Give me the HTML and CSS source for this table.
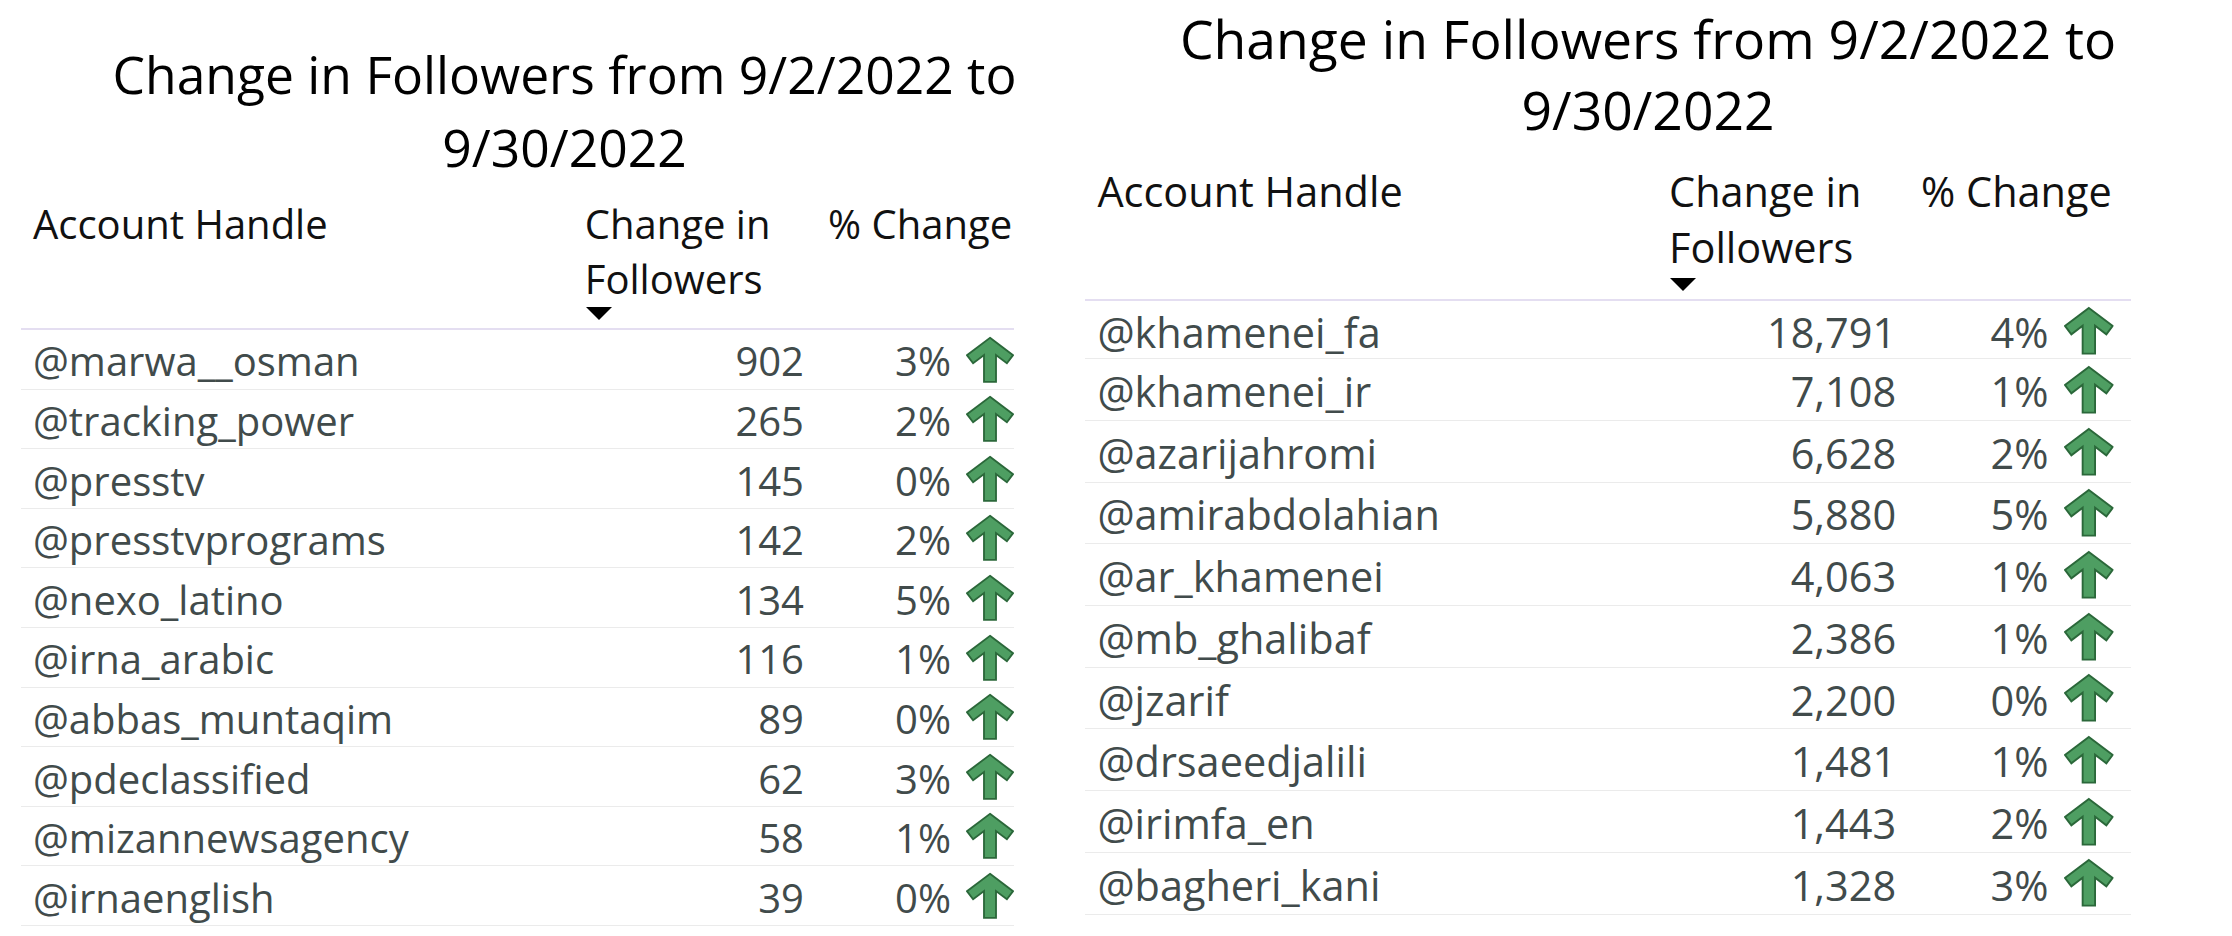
FILE: index.html
```html
<!DOCTYPE html>
<html lang="en">
<head>
<meta charset="utf-8">
<title>Change in Followers</title>
<link rel="stylesheet" href="styles.css">
</head>
<body>
<svg class="defs" width="0" height="0" aria-hidden="true">
  <symbol id="up-arrow" viewBox="0 0 52 50">
    <polygon points="26,1.2 51,20 44.3,28.8 32.5,19.8 32.5,49 19.5,49 19.5,19.8 7.7,28.8 1,20" fill="#4e9e62" stroke="#2b683a" stroke-width="2" stroke-linejoin="miter"/>
  </symbol>
</svg>
<main class="board">
  <section class="panel panel--left">
    <h1 class="title"><span class="title-line">Change in Followers from 9/2/2022 to</span><span class="title-line">9/30/2022</span></h1>
    <div class="table">
      <div class="thead">
        <div class="th th-handle">Account Handle</div>
        <div class="th th-change"><span class="th-text">Change in Followers</span><span class="sort"></span></div>
        <div class="th th-pct">% Change</div>
      </div>
      <div class="tr"><div class="td td-handle">@marwa__osman</div><div class="td td-num">902</div><div class="td td-pct"><span>3%</span><svg class="up"><use href="#up-arrow"/></svg></div></div>
      <div class="tr"><div class="td td-handle">@tracking_power</div><div class="td td-num">265</div><div class="td td-pct"><span>2%</span><svg class="up"><use href="#up-arrow"/></svg></div></div>
      <div class="tr"><div class="td td-handle">@presstv</div><div class="td td-num">145</div><div class="td td-pct"><span>0%</span><svg class="up"><use href="#up-arrow"/></svg></div></div>
      <div class="tr"><div class="td td-handle">@presstvprograms</div><div class="td td-num">142</div><div class="td td-pct"><span>2%</span><svg class="up"><use href="#up-arrow"/></svg></div></div>
      <div class="tr"><div class="td td-handle">@nexo_latino</div><div class="td td-num">134</div><div class="td td-pct"><span>5%</span><svg class="up"><use href="#up-arrow"/></svg></div></div>
      <div class="tr"><div class="td td-handle">@irna_arabic</div><div class="td td-num">116</div><div class="td td-pct"><span>1%</span><svg class="up"><use href="#up-arrow"/></svg></div></div>
      <div class="tr"><div class="td td-handle">@abbas_muntaqim</div><div class="td td-num">89</div><div class="td td-pct"><span>0%</span><svg class="up"><use href="#up-arrow"/></svg></div></div>
      <div class="tr"><div class="td td-handle">@pdeclassified</div><div class="td td-num">62</div><div class="td td-pct"><span>3%</span><svg class="up"><use href="#up-arrow"/></svg></div></div>
      <div class="tr"><div class="td td-handle">@mizannewsagency</div><div class="td td-num">58</div><div class="td td-pct"><span>1%</span><svg class="up"><use href="#up-arrow"/></svg></div></div>
      <div class="tr"><div class="td td-handle">@irnaenglish</div><div class="td td-num">39</div><div class="td td-pct"><span>0%</span><svg class="up"><use href="#up-arrow"/></svg></div></div>
    </div>
  </section>
  <section class="panel panel--right">
    <h1 class="title"><span class="title-line">Change in Followers from 9/2/2022 to</span><span class="title-line">9/30/2022</span></h1>
    <div class="table">
      <div class="thead">
        <div class="th th-handle">Account Handle</div>
        <div class="th th-change"><span class="th-text">Change in Followers</span><span class="sort"></span></div>
        <div class="th th-pct">% Change</div>
      </div>
      <div class="tr"><div class="td td-handle">@khamenei_fa</div><div class="td td-num">18,791</div><div class="td td-pct"><span>4%</span><svg class="up"><use href="#up-arrow"/></svg></div></div>
      <div class="tr"><div class="td td-handle">@khamenei_ir</div><div class="td td-num">7,108</div><div class="td td-pct"><span>1%</span><svg class="up"><use href="#up-arrow"/></svg></div></div>
      <div class="tr"><div class="td td-handle">@azarijahromi</div><div class="td td-num">6,628</div><div class="td td-pct"><span>2%</span><svg class="up"><use href="#up-arrow"/></svg></div></div>
      <div class="tr"><div class="td td-handle">@amirabdolahian</div><div class="td td-num">5,880</div><div class="td td-pct"><span>5%</span><svg class="up"><use href="#up-arrow"/></svg></div></div>
      <div class="tr"><div class="td td-handle">@ar_khamenei</div><div class="td td-num">4,063</div><div class="td td-pct"><span>1%</span><svg class="up"><use href="#up-arrow"/></svg></div></div>
      <div class="tr"><div class="td td-handle">@mb_ghalibaf</div><div class="td td-num">2,386</div><div class="td td-pct"><span>1%</span><svg class="up"><use href="#up-arrow"/></svg></div></div>
      <div class="tr"><div class="td td-handle">@jzarif</div><div class="td td-num">2,200</div><div class="td td-pct"><span>0%</span><svg class="up"><use href="#up-arrow"/></svg></div></div>
      <div class="tr"><div class="td td-handle">@drsaeedjalili</div><div class="td td-num">1,481</div><div class="td td-pct"><span>1%</span><svg class="up"><use href="#up-arrow"/></svg></div></div>
      <div class="tr"><div class="td td-handle">@irimfa_en</div><div class="td td-num">1,443</div><div class="td td-pct"><span>2%</span><svg class="up"><use href="#up-arrow"/></svg></div></div>
      <div class="tr"><div class="td td-handle">@bagheri_kani</div><div class="td td-num">1,328</div><div class="td td-pct"><span>3%</span><svg class="up"><use href="#up-arrow"/></svg></div></div>
    </div>
  </section>
</main>
</body>
</html>
```

FILE: styles.css
```css
* { box-sizing: border-box; }

html, body {
  margin: 0;
  padding: 0;
  background: #ffffff;
}

body {
  font-family: "Open Sans", "Noto Sans", sans-serif;
  color: #000;
  overflow: hidden;
}

.defs {
  position: absolute;
  width: 0;
  height: 0;
  overflow: hidden;
}

.board {
  display: flex;
  align-items: flex-start;
  width: 2232px;
  height: 936px;
}

.panel {
  --u: 40px;
  --tail: 0px;
  --title-top: 37.5px;
  --title-lh: 73px;
  --title-gap: 12px;
  --first-row: calc(var(--u) * 1.465 + 1px);
  font-size: var(--u);
  flex: none;
  padding-left: 21px;
  padding-top: var(--title-top);
}

.panel--left {
  width: 1064px;
}

.panel--right {
  --u: 41.44px;
  --tail: 17px;
  --title-top: 3px;
  --title-lh: 71px;
  --title-gap: 17.5px;
  --first-row: calc(var(--u) * 1.37 + 1px);
}

.title {
  margin: 0 0 var(--title-gap) 0;
  width: calc(var(--u) * 27.175);
  font-size: calc(var(--u) * 1.29);
  line-height: var(--title-lh);
  font-weight: 400;
  text-align: center;
  color: #000;
}

.title-line {
  display: block;
  white-space: nowrap;
}

.table {
  width: calc(var(--u) * 24.825 + var(--tail));
}

.thead,
.tr {
  display: grid;
  grid-template-columns: calc(var(--u) * 13.875) calc(var(--u) * 6) calc(var(--u) * 4.95) var(--tail);
}

.thead {
  border-bottom: 2px solid #e4def1;
  padding-bottom: calc(var(--u) * 0.2);
  line-height: calc(var(--u) * 1.375);
  color: #111;
}

.th {
  white-space: nowrap;
}

.th-handle {
  padding-left: calc(var(--u) * 0.3);
}

.th-change {
  padding-left: calc(var(--u) * 0.22);
  white-space: normal;
  display: flex;
  flex-direction: column;
  align-items: flex-start;
}

.th-text {
  display: block;
  width: calc(var(--u) * 5.4);
}

.sort {
  display: block;
  margin-top: calc(var(--u) * 0.04);
  margin-left: calc(var(--u) * 0.02);
  width: 0;
  height: 0;
  border-left: calc(var(--u) * 0.3375) solid transparent;
  border-right: calc(var(--u) * 0.3375) solid transparent;
  border-top: calc(var(--u) * 0.325) solid #000;
}

.th-pct {
  padding-left: calc(var(--u) * 0.3);
}

.tr {
  height: calc(var(--u) * 1.465 + 1px);
  border-bottom: 1px solid #ebebeb;
  align-items: center;
  color: #414b4b;
}

.thead + .tr {
  height: var(--first-row);
}

.td {
  white-space: nowrap;
  padding-top: 3px;
}

.td-handle {
  padding-left: calc(var(--u) * 0.3);
}

.td-num {
  text-align: right;
  padding-right: calc(var(--u) * 0.3);
}

.td-pct {
  display: flex;
  align-items: center;
  justify-content: flex-end;
  gap: calc(var(--u) * 0.375);
  padding-top: 0;
}

.td-pct span {
  padding-top: 3px;
}

.up {
  width: calc(var(--u) * 1.2);
  height: calc(var(--u) * 1.24);
  flex: none;
}
```
